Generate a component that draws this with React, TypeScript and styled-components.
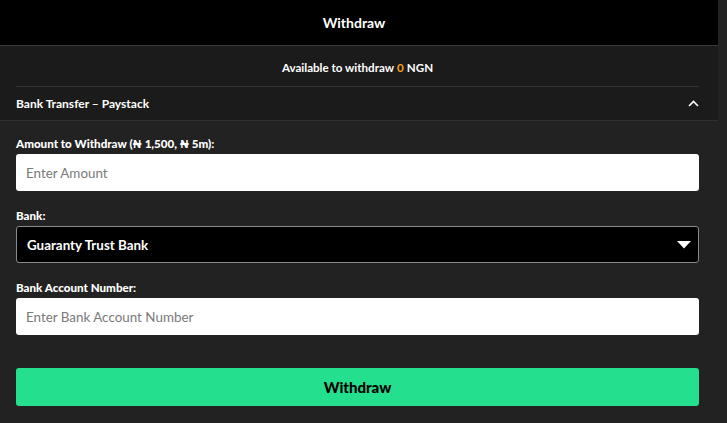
import React from "react";
import styled, { createGlobalStyle } from "styled-components";

const Global = createGlobalStyle`
  html, body { margin: 0; padding: 0; background: #222222; }
  body { font-family: Lato, "Noto Sans", "DejaVu Sans", sans-serif; color: #fff; }
  * { box-sizing: border-box; }
`;

const Page = styled.div`
  width: 727px;
  height: 423px;
  background: #222222;
  overflow: hidden;
`;

const Main = styled.div`
  width: 718px;
  display: flex;
  flex-direction: column;
`;

const Header = styled.header`
  height: 46px;
  background: #000;
  border-bottom: 1px solid #3a3a3a;
  display: flex;
  align-items: center;
  justify-content: center;
  padding-right: 10px;
  font-size: 14px;
  font-weight: 700;
  color: #fff;
`;

const Info = styled.section`
  background: #1b1b1b;
  border-bottom: 1px solid #303030;
  padding: 0 19px 0 16px;
`;

const Available = styled.div`
  height: 41px;
  display: flex;
  align-items: center;
  justify-content: center;
  font-size: 11.6px;
  font-weight: 700;
  border-bottom: 1px solid #333;
  padding-top: 2px;
`;

const Amount = styled.span`
  color: #f5a21b;
  margin: 0 3px;
`;

const AccordionHead = styled.div`
  height: 33px;
  display: flex;
  align-items: center;
  justify-content: space-between;
  font-size: 12px;
  font-weight: 700;
`;

const Form = styled.form`
  padding: 16px 19px 0 16px;
  display: flex;
  flex-direction: column;
`;

const Field = styled.div`
  display: flex;
  flex-direction: column;
  margin-bottom: ${(p: { $gap: number }) => p.$gap}px;
`;

const Label = styled.label`
  font-size: 11.6px;
  font-weight: 900;
  line-height: 14px;
  margin-bottom: 3px;
`;

const Input = styled.input`
  height: 37px;
  border: none;
  border-radius: 3px;
  background: #fff;
  padding: 0 10px;
  font-family: inherit;
  font-size: 13.4px;
  color: #222;
  outline: none;
  &::placeholder { color: #7a7a7a; }
`;

const Select = styled.div`
  height: 37px;
  border: 1px solid #8a8a8a;
  border-radius: 3px;
  background: #000;
  padding: 0 7px 0 10px;
  display: flex;
  align-items: center;
  justify-content: space-between;
  font-size: 13.4px;
  font-weight: 700;
  color: #fff;
`;

const Button = styled.button`
  height: 38px;
  border: none;
  border-radius: 3px;
  background: #24df8e;
  color: #000;
  font-family: inherit;
  font-size: 15px;
  font-weight: 900;
  cursor: pointer;
`;

export default function App() {
  return (
    <Page>
      <Global />
      <Main>
        <Header>Withdraw</Header>
        <Info>
          <Available>
            Available to withdraw<Amount>0</Amount>NGN
          </Available>
          <AccordionHead>
            <span>Bank Transfer – Paystack</span>
            <svg width="11" height="7" viewBox="0 0 11 7">
              <path d="M1 6 L5.5 1.5 L10 6" fill="none" stroke="#fff" strokeWidth="1.6" />
            </svg>
          </AccordionHead>
        </Info>
        <Form onSubmit={(e) => e.preventDefault()}>
          <Field $gap={18}>
            <Label>Amount to Withdraw (₦ 1,500, ₦ 5m):</Label>
            <Input placeholder="Enter Amount" />
          </Field>
          <Field $gap={18}>
            <Label>Bank:</Label>
            <Select>
              <span>Guaranty Trust Bank</span>
              <svg width="14" height="8" viewBox="0 0 14 8">
                <path d="M0 0 H14 L7 7.5 Z" fill="#fff" />
              </svg>
            </Select>
          </Field>
          <Field $gap={33}>
            <Label>Bank Account Number:</Label>
            <Input placeholder="Enter Bank Account Number" />
          </Field>
          <Button type="submit">Withdraw</Button>
        </Form>
      </Main>
    </Page>
  );
}
